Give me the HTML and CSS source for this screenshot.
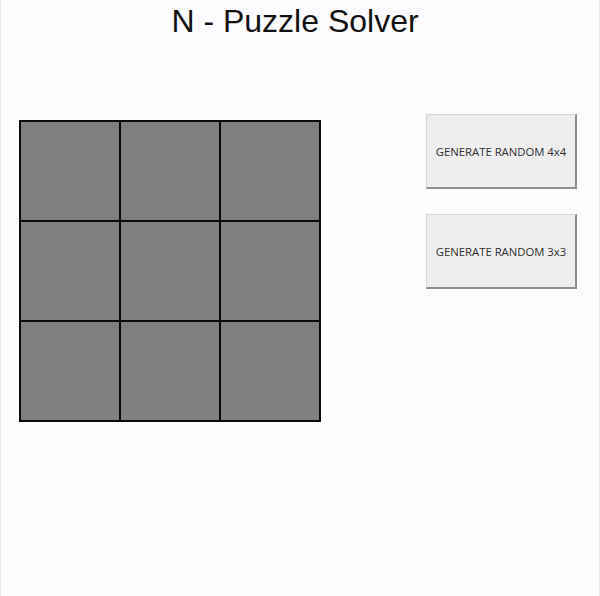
FILE: index.html
```html
<!DOCTYPE html>
<html>
<head>
<meta charset="utf-8">
<link rel="stylesheet" href="styles.css">
</head>
<body>
<div class="app">
  <h1 class="title">N - Puzzle Solver</h1>
  <div class="main">
    <div class="board">
      <div class="cell"></div><div class="cell"></div><div class="cell"></div>
      <div class="cell"></div><div class="cell"></div><div class="cell"></div>
      <div class="cell"></div><div class="cell"></div><div class="cell"></div>
    </div>
    <div class="controls">
      <button class="btn">GENERATE RANDOM 4x4</button>
      <button class="btn">GENERATE RANDOM 3x3</button>
    </div>
  </div>
</div>
</body>
</html>
```
FILE: styles.css
```css
html, body {
  margin: 0;
  padding: 0;
  background: #fdfcfe;
}
.app {
  width: 600px;
  height: 596px;
  box-sizing: border-box;
  border-left: 1px solid #e6e6e8;
  border-right: 1px solid #e6e6e8;
}
.title {
  margin: 0;
  padding-top: 2px;
  font-family: "Liberation Sans", Arial, sans-serif;
  font-weight: normal;
  font-size: 32px;
  line-height: 38px;
  color: #111;
  text-align: center;
  padding-right: 10px;
}
.main {
  display: flex;
  align-items: flex-start;
  margin-top: 80px;
  padding-left: 18px;
}
.board {
  display: grid;
  grid-template-columns: repeat(3, 98px);
  grid-template-rows: repeat(3, 98px);
  gap: 2px;
  padding: 2px;
  background: #0a0a0a;
}
.cell {
  background: #7f7e80;
}
.controls {
  display: flex;
  flex-direction: column;
  gap: 25px;
  margin-left: 105px;
  margin-top: -6px;
}
.btn {
  width: 151px;
  height: 75px;
  box-sizing: border-box;
  background: #efeeef;
  border: 1px solid #d6d6d8;
  border-right: 2px solid #8e8e8e;
  border-bottom: 2px solid #8e8e8e;
  font-family: "Open Sans", "Noto Sans", sans-serif;
  font-size: 11.3px;
  color: #2e2e2e;
  padding: 0;
}
```
